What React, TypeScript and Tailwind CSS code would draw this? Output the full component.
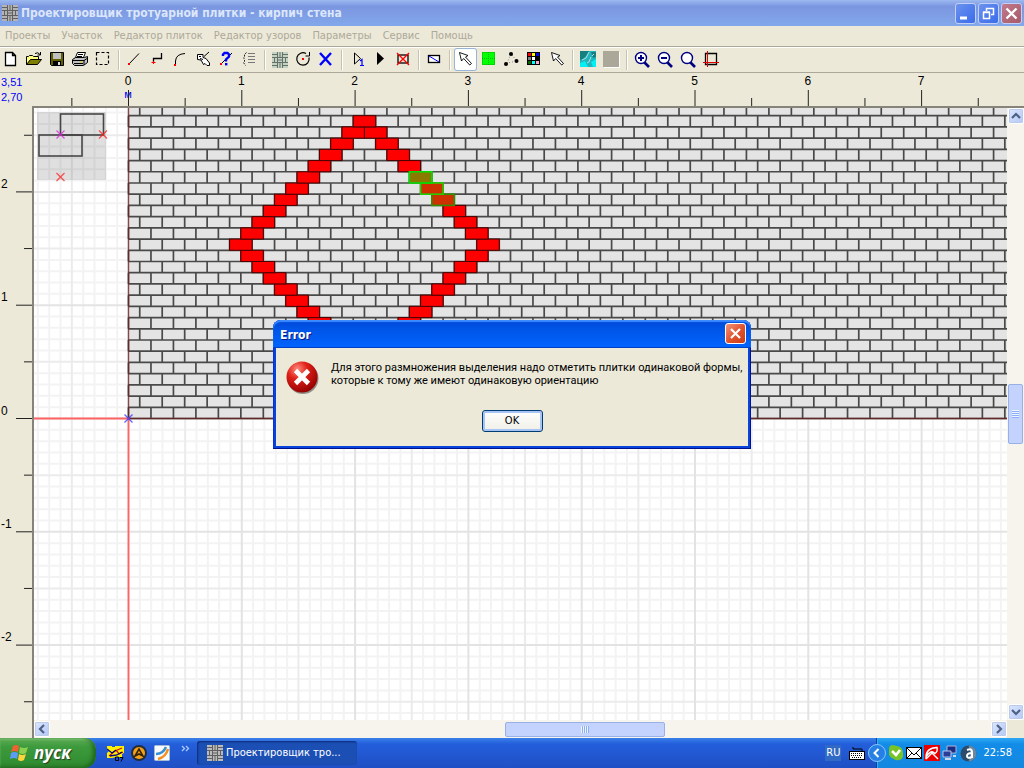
import React, { useEffect, useState } from 'react';

const UNIT = 113.3;
const BRICK_W = 22.47;
const BRICK_H = 11.215;
const OX = 94.5;
const OY = 310.5;

const range = (from: number, to: number) =>
  Array.from({ length: to - from + 1 }, (_, i) => from + i);

function useWindowSize() {
  const [size, setSize] = useState({ w: window.innerWidth, h: window.innerHeight });
  useEffect(() => {
    const update = () => setSize({ w: window.innerWidth, h: window.innerHeight });
    window.addEventListener('resize', update);
    return () => window.removeEventListener('resize', update);
  }, []);
  return size;
}

function gridPath(step: number, every: number, skip: number) {
  let d = '';
  for (let i = -10; i < 200; i++) {
    if (i % every !== 0 || (skip && i % skip === 0)) continue;
    d += `M${OX + i * step} 0V2000`;
  }
  for (let i = -150; i < 30; i++) {
    if (i % every !== 0 || (skip && i % skip === 0)) continue;
    d += `M0 ${OY - i * step}H2400`;
  }
  return d;
}

function jointPath() {
  let d = '';
  for (let k = 0; k < 28; k++) {
    const y = OY - k * BRICK_H;
    d += `M${OX} ${y}H2400`;
    for (let i = 0; i < 105; i++) {
      const x = OX + (i + (k % 2 ? 0.5 : 0)) * BRICK_W;
      d += `M${x} ${y}V${y - BRICK_H}`;
    }
  }
  return d;
}

type Brick = { d: number; col: number; fill: string; stroke: string };
const diamond: Brick[] = [];
for (let d = 0; d <= 22; d++) {
  const off = d <= 11 ? d / 2 : 11 - d / 2;
  for (const side of d === 0 || d === 22 ? [1] : [-1, 1]) {
    const picked = side === 1 && d >= 5 && d <= 7;
    diamond.push({
      d,
      col: 10 + side * off,
      fill: !picked ? '#ff0000' : d === 5 ? '#8a7a00' : '#cf3000',
      stroke: !picked ? '#4a0000' : d === 5 ? '#00e000' : d === 6 ? '#20d000' : '#309000',
    });
  }
}
diamond.sort((a, b) => Number(a.fill !== '#ff0000') - Number(b.fill !== '#ff0000') || b.d - a.d);

function Cross({ x, y, color }: { x: number; y: number; color: string }) {
  return (
    <path
      d={`M${x - 4} ${y - 4}l8 8M${x + 4} ${y - 4}l-8 8`}
      stroke={color}
      strokeWidth="1.3"
      opacity="0.75"
    />
  );
}

function Canvas() {
  return (
    <svg className="block h-full w-full bg-white" role="img" aria-label="Чертёж">
      <g fill="none">
        <path d={gridPath(UNIT / 10, 1, 5)} stroke="#f3f3f3" strokeWidth="2" />
        <path d={gridPath(UNIT / 10, 5, 10)} stroke="#ebebeb" strokeWidth="2" />
        <path d={gridPath(UNIT / 10, 10, 0)} stroke="#e3e3e3" strokeWidth="2" />
      </g>
      <rect x={OX} y="-5" width="2400" height={OY + 5} fill="#e4e4e4" />
      <path d={jointPath()} stroke="#000" strokeWidth="1.7" opacity="0.68" fill="none" />
      {diamond.map((b) => (
        <rect
          key={`${b.d}-${b.col}`}
          x={OX + b.col * BRICK_W}
          y={OY - (27 - b.d) * BRICK_H}
          width={BRICK_W}
          height={BRICK_H}
          fill={b.fill}
          stroke={b.stroke}
          strokeWidth={b.fill === '#ff0000' ? 1 : 1.6}
        />
      ))}
      <path d={`M${OX} 0V${OY}H2400`} fill="none" stroke="#6b2020" strokeWidth="1.4" opacity="0.8" />
      <path d={`M0 ${OY}H${OX}V2000`} fill="none" stroke="#ff6464" strokeWidth="1.8" />
      <Cross x={OX} y={OY} color="#3030ff" />
      <rect x="3" y="4" width="69" height="68" fill="#000" opacity="0.125" />
      <g fill="none" stroke="#222" strokeWidth="1.6" opacity="0.8">
        <rect x="26.5" y="6" width="43" height="21" />
        <rect x="5" y="27" width="43" height="21" />
      </g>
      <Cross x={26.5} y={26.5} color="#e020e0" />
      <Cross x={69} y={26.5} color="#ff2020" />
      <Cross x={26.5} y={69} color="#ff2020" />
    </svg>
  );
}

function TopRuler() {
  const last = Math.floor((useWindowSize().w - 140) / (UNIT / 2));
  return (
    <svg className="block h-full w-full" aria-label="Горизонтальная линейка">
      <g fontSize="11" fontFamily='"Liberation Sans", Arial, sans-serif'>
        <text x="1" y="13" fill="#0000ff">3,51</text>
        <text x="1" y="28" fill="#0000ff">2,70</text>
        <text x="128" y="25" fill="#0000ff" textAnchor="middle">м</text>
        {range(0, Math.floor(last / 2)).map((n) => (
          <text key={n} x={128 + n * UNIT} y="12" fontSize="12" textAnchor="middle">{n}</text>
        ))}
      </g>
      {range(-1, last).map((n) => (
        <path key={n} d={`M${128.5 + (n * UNIT) / 2} ${n % 2 ? 25 : 17}V33`} stroke="#222" />
      ))}
    </svg>
  );
}

function LeftRuler() {
  const lowest = -Math.floor((useWindowSize().h - 460) / (UNIT / 2));
  return (
    <svg className="block h-full w-full" aria-label="Вертикальная линейка">
      {range(lowest, 5).map((n) => {
        const y = 312.5 - (n * UNIT) / 2;
        return (
          <g key={n}>
            <path d={`M${n % 2 ? 24 : 16} ${y}H32`} stroke="#222" />
            {n % 2 === 0 && (
              <text x="1" y={y - 4} fontSize="12" fontFamily='"Liberation Sans", Arial, sans-serif'>
                {n / 2}
              </text>
            )}
          </g>
        );
      })}
    </svg>
  );
}

const arrow = (
  <path
    d="M5.5 4.5l2 8.5 2.200-2.500 6 6.500 1.800-1.500-6-6.500 2.500-1.500z"
    fill="#fff"
    stroke="#000"
    strokeWidth="0.900"
  />
);

function Weave({ bg, line }: { bg: string; line: string }) {
  return (
    <>
      <rect x="3" y="4" width="16" height="16" fill={bg} />
      <path
        d="M3 6.500h5M3 9.500h16M14 6.500h5M8.500 4v6M11 4v6M13.500 4v6M3 14.500h16M5.500 10v5M8.500 10v5M13.500 10v5M16.500 10v5M9 12h4M8.500 15v5M11 15v5M13.500 15v5M3 17.500h5M14 17.500h5"
        stroke={line}
        strokeWidth="1"
      />
    </>
  );
}

const lens = (
  <>
    <path d="M13 14l5 5" stroke="#000080" strokeWidth="2.6" />
    <circle cx="10" cy="10" r="5.5" fill="#fff" stroke="#000080" strokeWidth="1.4" />
  </>
);

type Tool = { name: string; art: React.ReactNode; pressed?: boolean };

const groups: Tool[][] = [
  [
    { name: 'Создать', art: <path d="M5.5 4.5h7l3 3v10h-10zM12.5 4.5v3h3" fill="#fff" stroke="#000" strokeWidth="1.3" /> },
    {
      name: 'Открыть',
      art: (
        <>
          <path d="M3.5 16.5v-8h2l1-1h3l1 1h5v3" fill="#ffff80" stroke="#000" />
          <path d="M3.5 16.5l4-5h11l-4 5z" fill="#808000" stroke="#000" />
          <path d="M12 5.500q3-2 5 1M17.500 4v3h-3" fill="none" stroke="#000" />
        </>
      ),
    },
    {
      name: 'Сохранить',
      art: (
        <>
          <path d="M4.500 4.500h13v13h-12l-1-1z" fill="#606000" stroke="#000" />
          <path d="M7 5h8v6H7z" fill="#c0c0c0" />
          <path d="M7 13h8v5H7z" fill="#000" />
          <path d="M12 14h2v3h-2z" fill="#ddd" />
        </>
      ),
    },
    {
      name: 'Печать',
      art: (
        <>
          <path d="M8.500 4.500h8l-2 5h-8z" fill="#fff" stroke="#000" />
          <path d="M9 6.500h5M8 8.500h5" stroke="#000" />
          <path d="M3.500 11.500l3-2h9l3-1v6l-4 3h-9l-2-2z" fill="#c0c0c0" stroke="#000" />
          <path d="M4 12.500h11l3-2M5 15.500h9M15 12v5" stroke="#000" fill="none" />
          <path d="M11 14h2" stroke="#e0d000" />
        </>
      ),
    },
    { name: 'Рамка', art: <rect x="4.500" y="4.500" width="12" height="12" fill="none" stroke="#000" strokeWidth="1.200" strokeDasharray="3 2" /> },
  ],
  [
    { name: 'Линия', art: <><path d="M6 16L16 5.500" stroke="#000" /><path d="M5 15h2v2H5z" fill="#f00" /></> },
    { name: 'Ломаная', art: <><path d="M15.500 5v5.500h-8V14" fill="none" stroke="#000" strokeWidth="1.300" /><path d="M7.500 13v3M5.500 14.500h4" stroke="#f00" /></> },
    { name: 'Дуга', art: <><path d="M6.500 16V13Q7 6 16 5.500" fill="none" stroke="#000" /><path d="M5 16h2v2H5z" fill="#f00" /></> },
    {
      name: 'Правка',
      art: (
        <>
          <path d="M12 8.500l5-4.500" stroke="#000" />
          <path d="M5.500 6.500h5.500v3l3 1 3.500 4.500v2.500h-2.500l-2-2-1.500 1-2.500-4.500-3.500-.5z" fill="#fff" stroke="#000" />
          <path d="M7 8.500h2M8 10.500l3 1" stroke="#000" />
        </>
      ),
    },
    {
      name: 'Справка',
      art: (
        <>
          <path d="M6 16L17 5" stroke="#000" />
          <path d="M8 8V6.500L9.500 5h3L14 6.500v2L11 11.500v2" fill="none" stroke="#0000ff" strokeWidth="2.400" />
          <path d="M10 15h2.400v2.400h-2.400z" fill="#00f" /><path d="M5 15h2v2H5z" fill="#f00" />
        </>
      ),
    },
    {
      name: 'Список',
      art: <><path d="M8.500 4.500l-2 2v2l-1 1.500 1 1v2.500l-1 1 2 3" stroke="#222" fill="none" strokeDasharray="2 1" /><path d="M10 5.500h7M10 8.500h7M10 11.500h7M10 14.500h7" stroke="#777" /></>,
    },
  ],
  [
    { name: 'Плитка', art: <Weave bg="#c2d3c2" line="#66716a" /> },
    { name: 'Повернуть', art: <><path d="M17 9.500A6.200 6.200 0 1 1 14 5.500" stroke="#000" strokeWidth="1.200" fill="none" /><path d="M17.500 4v4h-4" stroke="#000" fill="none" /><path d="M10 10h2v2h-2z" fill="#f00" /></> },
    { name: 'Удалить', art: <path d="M5 5l11 12M16 5L5 17" stroke="#0000ff" strokeWidth="2.400" /> },
  ],
  [
    { name: 'Шаг', art: <><path d="M8.500 5v11l6-5.500z" fill="none" stroke="#000" /><path d="M14 13l2-1.500V17M14 17.500h4" fill="none" stroke="#00f" strokeWidth="1.200" /></> },
    { name: 'Пуск', art: <path d="M8 4v13l7-6.500z" fill="#000" /> },
    { name: 'Стоп', art: <><rect x="6" y="7" width="10" height="8" fill="none" stroke="#000" strokeWidth="1.300" /><path d="M5 5l12 12M17 5L5 17" stroke="#f00" strokeWidth="1.300" /></> },
  ],
  [{ name: 'Плоскость', art: <><rect x="5.500" y="7.500" width="11" height="7" fill="#fff" stroke="#000" strokeWidth="1.300" /><path d="M6 8l10 6" stroke="#00f" /></> }],
  [
    { name: 'Выбор', art: arrow, pressed: true },
    { name: 'Заливка', art: <><path d="M5 4h13v13H5z" fill="#00ff00" /><path d="M5.500 4.500h12v12h-12zM11.500 4v13M5 10.500h13" fill="none" stroke="#00b000" strokeDasharray="1 1" /></> },
    { name: 'Узлы', art: <><path d="M11 6l-4 9 10-2z" fill="none" stroke="#888" strokeDasharray="1 2" /><circle cx="11" cy="6" r="2" /><circle cx="6" cy="16" r="2" /><circle cx="16.500" cy="13" r="2" /></> },
    {
      name: 'Палитра',
      art: (
        <>
          <path d="M4 4h13v13H4z" fill="#000" />
          {['#f00', '#ff0', '#00f', '#808080', '#fff', '#000', '#006400', '#0ff', '#ffaad4'].map((c, i) => (
            <rect key={c} x={5 + (i % 3) * 4} y={5 + Math.floor(i / 3) * 4} width="3" height="3" fill={c} />
          ))}
        </>
      ),
    },
    { name: 'Указатель', art: arrow },
  ],
  [
    {
      name: 'Текстура',
      art: (
        <>
          <path d="M3 3h16v16H3z" fill="#20b4bc" />
          <path d="M3 3h9l-3 5-3 3-3 1zM14 4h5v5l-3 1z" fill="#168080" />
          <path d="M3 15l5-2 3 6H3zM14 14l5-3v8h-3z" fill="#00f0f4" />
          <path d="M12 4l-3 6-4 2M14 9l-2 5-2 1M17 6l-2 2" stroke="#b4dcdc" fill="none" />
        </>
      ),
    },
    { name: 'Цвет', art: <><path d="M4 4h16v16H4z" fill="#fff" /><path d="M3 3h16v16H3z" fill="#aca899" /></> },
  ],
  [
    { name: 'Увеличить', art: <>{lens}<path d="M7 10h6M10 7v6" stroke="#000080" strokeWidth="2" /></> },
    { name: 'Уменьшить', art: <>{lens}<path d="M7 10h6" stroke="#000080" strokeWidth="2" /></> },
    { name: 'Масштаб', art: lens },
    { name: 'Обрезка', art: <><path d="M5.500 16.500v-11h11v11z" fill="none" stroke="#000" strokeWidth="1.300" /><path d="M7.500 3v16M3 14.500h16" stroke="#e00000" /></> },
  ],
];

function Toolbar() {
  return (
    <div className="flex h-[27px] shrink-0 items-center border-t border-b border-[#aca899] shadow-[inset_0_1px_0_#fff]">
      {groups.map((tools, g) => (
        <React.Fragment key={g}>
          {g > 0 && <span className="mx-[3px] h-5 w-0.5 border-r border-white bg-[#c5c2b0]" />}
          {tools.map((t) => (
            <button
              key={t.name}
              aria-label={t.name}
              aria-pressed={t.pressed}
              className={t.pressed ? 'h-[23px] w-[23px] rounded-[3px] bg-white ring-1 ring-[#98b5d8] ring-inset' : 'h-[23px] w-[23px]'}
            >
              <svg width="23" height="23" viewBox="0 0 23 23">{t.art}</svg>
            </button>
          ))}
        </React.Fragment>
      ))}
    </div>
  );
}

function ScrollButton({ label, d }: { label: string; d: string }) {
  return (
    <button
      aria-label={label}
      className="flex h-4 w-4 shrink-0 items-center justify-center rounded-xs border border-white bg-linear-to-br from-[#dce6ff] to-[#b4c8f6] shadow-[0_0_0_1px_#bccbe8_inset]"
    >
      <svg width="10" height="10" viewBox="0 0 10 10">
        <path d={d} fill="none" stroke="#4d6185" strokeWidth="2.2" />
      </svg>
    </button>
  );
}

function WindowButton({ label, red, children }: { label: string; red?: boolean; children: React.ReactNode }) {
  return (
    <button
      aria-label={label}
      className={
        red
          ? 'flex h-[21px] w-[21px] items-center justify-center rounded-[3px] border border-[#c3d0f5] bg-linear-to-br from-[#c0798c] to-[#a85a68]'
          : 'flex h-[21px] w-[21px] items-center justify-center rounded-[3px] border border-[#c3d0f5] bg-linear-to-br from-[#6b92ee] to-[#3a6bea]'
      }
    >
      <svg width="19" height="19" viewBox="0 0 19 19" fill="none" stroke="#fff">{children}</svg>
    </button>
  );
}

function ErrorDialog() {
  return (
    <div className="fixed inset-0 grid place-items-center">
      <section
        role="alertdialog"
        aria-labelledby="dialog-title"
        aria-describedby="dialog-text"
        className="w-[478px] rounded-t-lg bg-[#0844dc] px-[3px] pb-[3px] shadow-[inset_-1px_-1px_0_#00138c,inset_1px_0_0_#0831d9]"
      >
        <header className="-mx-[3px] flex h-7 items-center justify-between rounded-t-lg bg-linear-to-b from-[#0046d8] from-0% via-[#0054e6] via-30% to-[#0062fc] to-90% pr-[5px] pl-[7px] shadow-[inset_0_2px_1px_#3c8cff,inset_0_-1px_0_#0040c8]">
          <h2 id="dialog-title" className="pt-0.5 text-xs font-bold text-white [text-shadow:1px_1px_#0a1883]">
            Error
          </h2>
          <button
            aria-label="Закрыть"
            className="flex h-[21px] w-[21px] items-center justify-center rounded-[3px] border border-white bg-linear-to-br from-[#f09478] via-[#e25430] to-[#c83c10]"
          >
            <svg width="13" height="13" viewBox="0 0 13 13">
              <path d="M2 2l9 9M11 2l-9 9" stroke="#fff" strokeWidth="2.2" />
            </svg>
          </button>
        </header>
        <div className="bg-[#ece9d8] px-2.5 pt-[13px] pb-3.5">
          <div className="flex gap-3">
            <svg width="33" height="33" viewBox="0 0 33 33" className="shrink-0">
              <defs>
                <radialGradient id="errorBall" cx="0.35" cy="0.25" r="0.8">
                  <stop offset="0" stopColor="#ff8c80" />
                  <stop offset="0.4" stopColor="#e02018" />
                  <stop offset="1" stopColor="#900000" />
                </radialGradient>
              </defs>
              <circle cx="17" cy="17.500" r="15.500" fill="#555" opacity="0.6" />
              <circle cx="16" cy="16" r="15.500" fill="url(#errorBall)" />
              <path d="M9.500 9.500l13 13M22.500 9.500l-13 13" stroke="#fff" strokeWidth="4.600" />
            </svg>
            <p id="dialog-text" className="font-['Roboto','Liberation_Sans',sans-serif] text-[11px] leading-[13px] whitespace-nowrap">
              Для этого размножения выделения надо отметить плитки одинаковой формы,
              <br />
              которые к тому же имеют одинаковую ориентацию
            </p>
          </div>
          <div className="mt-4 flex justify-center">
            <button className="h-[22px] w-[61px] rounded-[3px] border border-[#003c74] bg-linear-to-b from-white to-[#f0efe8] text-[11px] leading-4 shadow-[inset_0_0_0_2px_#a8c4f4]">
              OK
            </button>
          </div>
        </div>
      </section>
    </div>
  );
}

function Taskbar() {
  return (
    <footer className="flex h-[30px] shrink-0 items-stretch bg-linear-to-b from-[#3a80ea] from-0% via-[#245edb] via-20% to-[#1f4fc4] text-[11px] text-white">
      <button className="flex w-24 items-center gap-1 rounded-r-xl bg-linear-to-b from-[#5eac56] from-0% via-[#3c9a3c] via-30% to-[#2f8a2f] pl-2.5 shadow-[inset_-3px_-1px_4px_#1c641c,inset_0_2px_2px_#80c878]">
        <svg width="20" height="20" viewBox="0 0 20 20">
          <path d="M3 3q3-2 6 0l-1 6q-3-2-7 0z" fill="#f06030" />
          <path d="M10 4q4 2 8 0l-2 6q-3 2-7 0z" fill="#8cd050" />
          <path d="M1 10q3-2 7 0l-1 6q-3-2-7 0z" fill="#5c9cf8" />
          <path d="M9 11q3 2 7 0l-2 6q-3 2-6 0z" fill="#fcd43c" />
        </svg>
        <span className="font-['Open_Sans','Noto_Sans',sans-serif] text-[17px] leading-5 font-bold italic [text-shadow:1px_1px_1px_#204020]">
          пуск
        </span>
      </button>
      <div className="flex items-center gap-[7px] pl-[11px]">
        <button aria-label="Редактор">
          <svg width="17" height="17" viewBox="0 0 17 17">
            <path d="M0 1h5v1h3V1h9v7l-2 1v3H9l-4 1H0V8l2-2-2-1z" fill="#fff000" />
            <path d="M2 11l6-5 7-3M9 5l3 4 4-2" stroke="#d01010" strokeWidth="1.300" fill="none" />
            <path d="M0 4l5 4 4-3M3 11l7-1 5-3" stroke="#000080" strokeWidth="1.300" fill="none" />
            <path d="M8.500 12h3v3.500h-3zM13 12.500h3l-2 4" stroke="#000" fill="none" />
          </svg>
        </button>
        <button aria-label="Плеер">
          <svg width="16" height="16" viewBox="0 0 16 16">
            <circle cx="8" cy="8" r="8" fill="#222c3c" />
            <circle cx="8" cy="8" r="6" fill="#f4a018" />
            <path d="M4 11l4-7 4 7-4-2z" fill="none" stroke="#332200" strokeWidth="1.600" />
          </svg>
        </button>
        <button aria-label="Просмотр">
          <svg width="16" height="16" viewBox="0 0 16 16">
            <rect x="0.500" y="0.500" width="15" height="15" rx="1" fill="#f8fafc" stroke="#a8bcd0" />
            <path d="M2 9Q9 9 12 2" stroke="#3890d0" strokeWidth="2.500" fill="none" />
            <path d="M4 14Q12 12 14 4" stroke="#f49020" strokeWidth="2.500" fill="none" />
          </svg>
        </button>
        <button aria-label="Другие значки" className="mb-2.5 ml-1">
          <svg width="9" height="7" viewBox="0 0 9 7">
            <path d="M1 1l2.500 2.500L1 6M5 1l2.500 2.500L5 6" stroke="#a8ccff" strokeWidth="1.300" fill="none" />
          </svg>
        </button>
      </div>
      <button className="my-[3px] ml-[7px] flex w-40 items-center gap-[3px] rounded-[3px] bg-[#1c4fb4] pl-2.5 shadow-[inset_1px_1px_2px_#0c2c78]">
        <svg width="16" height="16" viewBox="3 4 16 16"><Weave bg="#bbb" line="#606060" /></svg>
        <span>Проектировщик тро...</span>
      </button>
      <div className="ml-auto flex items-center gap-2 pr-2.5">
        <span className="bg-[#316ac5] px-px">RU</span>
        <svg width="17" height="15" viewBox="0 0 17 15">
          <path d="M4 1v2h9v3" stroke="#000" fill="none" />
          <rect x="0.500" y="5.500" width="15" height="8" fill="#fff" stroke="#000" />
          <path d="M2 7.500h12M2 9.500h12M3 11.500h10" stroke="#000" strokeDasharray="1 1" />
        </svg>
      </div>
      <div className="flex items-center gap-0.5 border-l border-[#0c3c9c] bg-linear-to-b from-[#2ca8f4] from-0% via-[#128ce8] via-20% to-[#1488e0] pr-3 shadow-[inset_1px_0_0_#30b4f8]">
        <button aria-label="Скрытые значки" className="-ml-[9px]">
          <svg width="18" height="18" viewBox="0 0 18 18">
            <circle cx="9" cy="9" r="8.500" fill="#2480e4" stroke="#88c8fc" />
            <path d="M10.500 5l-4 4 4 4" stroke="#fff" strokeWidth="2" fill="none" />
          </svg>
        </button>
        <svg width="16" height="16" viewBox="0 0 16 16">
          <path d="M1 4q0-4 4-4l4 1q6 1 6 7 1 6-4 7-3 1-5-1-6-2-5-7z" fill="#78c428" />
          <path d="M4 6l4 4 4-5" stroke="#fff" strokeWidth="2.600" fill="none" />
        </svg>
        <svg width="16" height="16" viewBox="0 0 16 16">
          <rect x="0.500" y="2.500" width="15" height="11" fill="#fff" stroke="#000" />
          <path d="M1 3l7 7 7-7M1 13l5-5M15 13l-5-5" stroke="#000" fill="none" />
        </svg>
        <svg width="16" height="16" viewBox="0 0 16 16">
          <path d="M0 0h16v16H0z" fill="#e80000" />
          <path d="M2 12Q2 3 13 2.500q1 4-2 6-3-3-5-1-2 1-4 4.500zM8 8l6 6M2 14l7-7" stroke="#fff" strokeWidth="1.400" fill="none" />
        </svg>
        <svg width="16" height="16" viewBox="0 0 16 16">
          <path d="M5 1h9v7H5z" fill="#1c2c80" stroke="#aab4dc" />
          <path d="M1 6h8v6H1z" fill="#283c98" stroke="#b8c4e8" />
          <path d="M3 14h6M11 11h3" stroke="#d0d4e8" strokeWidth="2" />
        </svg>
        <svg width="17" height="17" viewBox="0 0 17 17">
          <circle cx="8.500" cy="8.500" r="8" fill="#2c4c6c" />
          <path d="M8.500 0.500a8 8 0 0 1 0 16q3-8 0-16z" fill="#6888a4" />
          <path d="M7 5q5-2 5 2v6M12 8q-5 0-5 3t5 1" stroke="#fff" strokeWidth="2" fill="none" />
        </svg>
        <time className="pl-1">22:58</time>
      </div>
    </footer>
  );
}

export default function App() {
  return (
    <div className="flex h-screen flex-col overflow-hidden bg-[#ece9d8] font-['DejaVu_Sans_Condensed','DejaVu_Sans',sans-serif] text-black">
      <header className="flex h-[26px] shrink-0 items-center justify-between bg-linear-to-b from-[#9db9f0] from-0% via-[#7b96e0] via-25% to-[#82a6ea] to-90% px-0.5">
        <div className="flex items-center gap-[3px]">
          <svg width="16" height="16" viewBox="3 4 16 16"><Weave bg="#b4b4b4" line="#606060" /></svg>
          <h1 className="text-xs leading-5 font-bold whitespace-nowrap text-[#dce6fb]">
            Проектировщик тротуарной плитки - кирпич стена
          </h1>
        </div>
        <div className="flex gap-0.5">
          <WindowButton label="Свернуть"><path d="M4 14h7" strokeWidth="3" /></WindowButton>
          <WindowButton label="Восстановить">
            <path d="M7.500 7V4.500h7v6H12" strokeWidth="1.500" /><path d="M4.500 8.500h6v6h-6zM4 8h7" strokeWidth="1.500" />
          </WindowButton>
          <WindowButton label="Закрыть окно" red><path d="M4.500 4.500l10 10M14.500 4.500l-10 10" strokeWidth="2.400" /></WindowButton>
        </div>
      </header>
      <nav className="flex h-5 shrink-0 items-center gap-[11px] px-[5px] text-[11px] text-[#aca899]">
        {['Проекты', 'Участок', 'Редактор плиток', 'Редактор узоров', 'Параметры', 'Сервис', 'Помощь'].map((m) => (
          <a key={m} href="#" className="whitespace-nowrap">{m}</a>
        ))}
      </nav>
      <Toolbar />
      <div className="h-[33px] shrink-0"><TopRuler /></div>
      <main className="flex min-h-0 flex-1">
        <div className="w-8 shrink-0"><LeftRuler /></div>
        <div className="flex min-w-0 flex-1 flex-col border-t-2 border-l-2 border-[#85837a]">
          <div className="flex min-h-0 flex-1">
            <div className="min-w-0 flex-1"><Canvas /></div>
            <div className="flex w-[17px] flex-col items-center bg-[#f6f4ec]">
              <ScrollButton label="Вверх" d="M1 7l4-4 4 4" />
              <div className="grow" />
              <div className="flex h-[60px] w-[15px] items-center justify-center rounded-xs border border-[#98b0e8] bg-[#c3d3fd]">
                <span className="h-2 w-[7px] bg-[repeating-linear-gradient(to_bottom,#eef4fe_0_1px,#8cb0f8_1px_2px)]" />
              </div>
              <div className="grow" />
              <ScrollButton label="Вниз" d="M1 3l4 4 4-4" />
            </div>
          </div>
          <div className="flex h-[18px] shrink-0 items-center bg-[#f6f4ec]">
            <ScrollButton label="Влево" d="M7 1L3 5l4 4" />
            <div className="grow-[456]" />
            <div className="flex h-[15px] w-40 items-center justify-center rounded-xs border border-[#98b0e8] bg-[#c3d3fd]">
              <span className="h-[7px] w-2 bg-[repeating-linear-gradient(to_right,#eef4fe_0_1px,#8cb0f8_1px_2px)]" />
            </div>
            <div className="grow-[326]" />
            <ScrollButton label="Вправо" d="M3 1l4 4-4 4" />
            <span className="h-full w-[17px] bg-[#ece9d8]" />
          </div>
        </div>
      </main>
      <Taskbar />
      <ErrorDialog />
    </div>
  );
}
